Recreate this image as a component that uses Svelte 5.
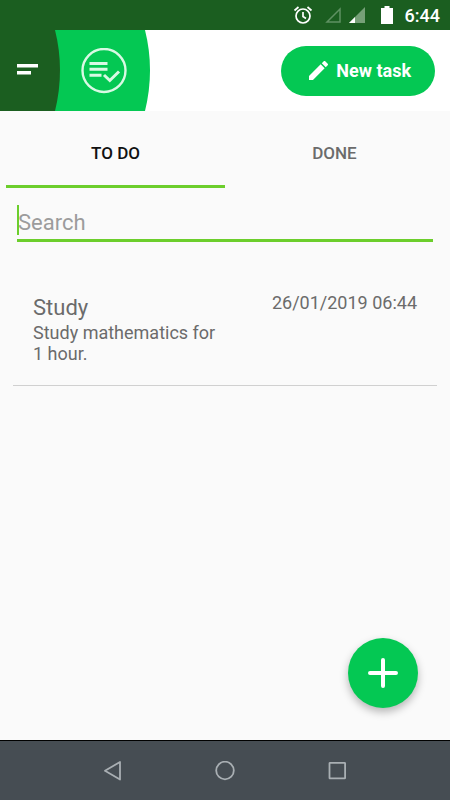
<script>
  let activeTab = $state("todo");
  let query = $state("");

  const tabs = [
    { id: "todo", label: "TO DO" },
    { id: "done", label: "DONE" },
  ];

  let tasks = $state([
    {
      title: "Study",
      description: "Study mathematics for 1 hour.",
      date: "26/01/2019 06:44",
      done: false,
    },
  ]);

  let visibleTasks = $derived(
    tasks.filter(
      (task) =>
        task.done === (activeTab === "done") &&
        task.title.toLowerCase().includes(query.toLowerCase())
    )
  );
</script>

<div class="screen">
  <div class="status">
    <svg class="alarm" viewBox="0 0 20 20">
      <circle cx="10" cy="11" r="7" />
      <path d="M10 7v4.5l3 2M1.5 5.5 5.5 2M18.5 5.5 14.5 2" />
    </svg>
    <svg class="signal" viewBox="0 0 16 16">
      <path d="M2 15H15V2Z" fill="none" stroke="#5f9162" stroke-width="1.5" />
    </svg>
    <svg class="signal" viewBox="0 0 16 16">
      <path d="M0 16H16V0Z" fill="#76a078" />
      <path d="M0 16H6V10Z" fill="#fff" />
    </svg>
    <svg class="battery" viewBox="0 0 12 18">
      <path d="M3.5 0h5v2H12v16H0V2h3.5Z" fill="#fff" />
    </svg>
    <span class="clock">6:44</span>
  </div>

  <header>
    <div class="brand">
      <svg class="brand-shape" viewBox="0 0 150 81">
        <path d="M0 0H145Q155 40 145 81H0Z" fill="#04c853" />
        <path d="M0 0H55Q65 40 55 81H0Z" fill="#1b5e20" />
      </svg>
      <button class="menu" aria-label="Menu">
        <svg viewBox="0 0 21 12">
          <path d="M0 1h21v3.5H0zM0 8h14v3.5H0z" fill="#fff" />
        </svg>
      </button>
      <svg class="logo" viewBox="0 0 46 46">
        <circle cx="23" cy="22.5" r="21.5" fill="none" stroke="#d9f9e4" stroke-width="2.4" />
        <path
          d="M8.5 15.5H26.5M8.5 21.3H26.5M8.5 27.2H20.5M23 27l5.8 5.5L38 23.5"
          fill="none"
          stroke="#d9f9e4"
          stroke-width="3"
        />
      </svg>
    </div>
    <button class="new-task">
      <svg viewBox="3 3 18 18">
        <path
          d="M3 17.25V21h3.75L17.81 9.94l-3.75-3.75L3 17.25zM20.71 7.04a1 1 0 0 0 0-1.41l-2.34-2.34a1 1 0 0 0-1.41 0l-1.83 1.83 3.75 3.75 1.83-1.83z"
          fill="#fff"
        />
      </svg>
      New task
    </button>
  </header>

  <main>
    <div class="tabs" role="tablist">
      {#each tabs as tab}
        <button
          class="tab"
          class:active={activeTab === tab.id}
          role="tab"
          aria-selected={activeTab === tab.id}
          onclick={() => (activeTab = tab.id)}
        >
          {tab.label}
        </button>
      {/each}
    </div>

    <div class="search">
      <input type="text" placeholder="Search" aria-label="Search" bind:value={query} />
      {#if !query}
        <span class="caret"></span>
      {/if}
    </div>

    <ul>
      {#each visibleTasks as task}
        <li>
          <div class="text">
            <h2>{task.title}</h2>
            <p>{task.description}</p>
          </div>
          <time>{task.date}</time>
        </li>
      {/each}
    </ul>

    <button class="fab" aria-label="Add task">
      <svg viewBox="0 0 30 30">
        <path d="M15 2v26M2 15h26" stroke="#fff" stroke-width="4" stroke-linecap="round" />
      </svg>
    </button>
  </main>

  <nav>
    <button aria-label="Back">
      <svg viewBox="0 0 20 20"><path d="M17 1V18.5L2 9.8Z" /></svg>
    </button>
    <button aria-label="Home">
      <svg viewBox="0 0 20 20"><circle cx="10" cy="9.5" r="8.8" /></svg>
    </button>
    <button aria-label="Recent apps">
      <svg viewBox="0 0 20 20"><rect x="2.5" y="1.8" width="15.6" height="15.6" rx="0.5" /></svg>
    </button>
  </nav>
</div>

<style>
  .screen {
    display: flex;
    flex-direction: column;
    min-height: 100vh;
    background: #fafafa;
    font-family: Roboto, "Liberation Sans", sans-serif;
    color: #6b6b6b;
  }

  button {
    border: 0;
    padding: 0;
    background: none;
    font: inherit;
    color: inherit;
    cursor: pointer;
  }

  svg {
    display: block;
  }

  .status {
    display: flex;
    justify-content: flex-end;
    align-items: center;
    height: 30px;
    padding-right: 10px;
    background: #1b5e20;
  }

  .alarm {
    width: 20px;
    height: 20px;
    margin-right: 12px;
    fill: none;
    stroke: #fff;
    stroke-width: 1.7;
  }

  .signal {
    width: 16px;
    height: 16px;
    margin-right: 8px;
  }

  .battery {
    width: 12px;
    height: 18px;
    margin: 0 12px 0 8px;
  }

  .clock {
    color: #fff;
    font-size: 18px;
    font-weight: 500;
  }

  header {
    display: flex;
    justify-content: space-between;
    align-items: center;
    padding-right: 15px;
    background: #fff;
  }

  .brand {
    position: relative;
    display: flex;
    align-items: center;
    width: 150px;
    height: 81px;
  }

  .brand-shape {
    position: absolute;
    inset: 0;
    width: 100%;
    height: 100%;
  }

  .menu {
    position: relative;
    padding: 16px 32px 20px 17px;
  }

  .menu svg {
    width: 21px;
    height: 12px;
  }

  .logo {
    position: relative;
    width: 46px;
    height: 46px;
    margin-left: 11px;
  }

  .new-task {
    display: flex;
    align-items: center;
    gap: 8px;
    height: 50px;
    padding: 0 24px 0 28px;
    border-radius: 25px;
    background: #04c853;
    color: #fff;
    font-size: 18px;
    font-weight: 700;
  }

  .new-task svg {
    width: 19px;
    height: 19px;
  }

  main {
    position: relative;
    flex: 1;
  }

  .tabs {
    display: flex;
    padding: 0 6px;
  }

  .tab {
    flex: 1;
    height: 77px;
    padding-top: 10px;
    border-bottom: 3px solid transparent;
    font-size: 17px;
    font-weight: 500;
  }

  .tab.active {
    border-color: #6cce2c;
    color: #111;
  }

  .search {
    position: relative;
    margin: 16px 17px 0;
  }

  .search input {
    display: block;
    box-sizing: border-box;
    width: 100%;
    height: 38px;
    padding: 2px 0 0 1px;
    border: 0;
    border-bottom: 3px solid #6cce2c;
    outline: none;
    background: none;
    font: inherit;
    font-size: 22px;
  }

  .search input::placeholder {
    color: #9c9c9c;
    opacity: 1;
  }

  .caret {
    position: absolute;
    top: 1px;
    left: 0;
    width: 2px;
    height: 30px;
    background: #6cce2c;
    pointer-events: none;
  }

  ul {
    margin: 31px 13px 0;
    padding: 0;
    list-style: none;
  }

  li {
    display: flex;
    justify-content: space-between;
    align-items: flex-start;
    padding: 20px 20px 21px;
    border-bottom: 1px solid #d0d0d0;
  }

  .text {
    width: 49%;
  }

  h2 {
    margin: 0;
    font-size: 22px;
    font-weight: 400;
    line-height: 29px;
  }

  p {
    margin: 0;
    font-size: 18px;
    line-height: 21px;
  }

  time {
    font-size: 18px;
    line-height: 20px;
  }

  .fab {
    position: absolute;
    right: 32px;
    bottom: 32px;
    display: flex;
    justify-content: center;
    align-items: center;
    width: 70px;
    height: 70px;
    border-radius: 50%;
    background: #04c853;
    box-shadow: 0 4px 9px rgba(0, 0, 0, 0.28);
  }

  .fab svg {
    width: 30px;
    height: 30px;
  }

  nav {
    display: flex;
    justify-content: center;
    align-items: center;
    gap: 92px;
    height: 59px;
    border-top: 1px solid #000;
    background: #464d53;
  }

  nav svg {
    width: 20px;
    height: 20px;
    fill: none;
    stroke: #a9afb3;
    stroke-width: 1.8;
    stroke-linejoin: round;
  }
</style>
